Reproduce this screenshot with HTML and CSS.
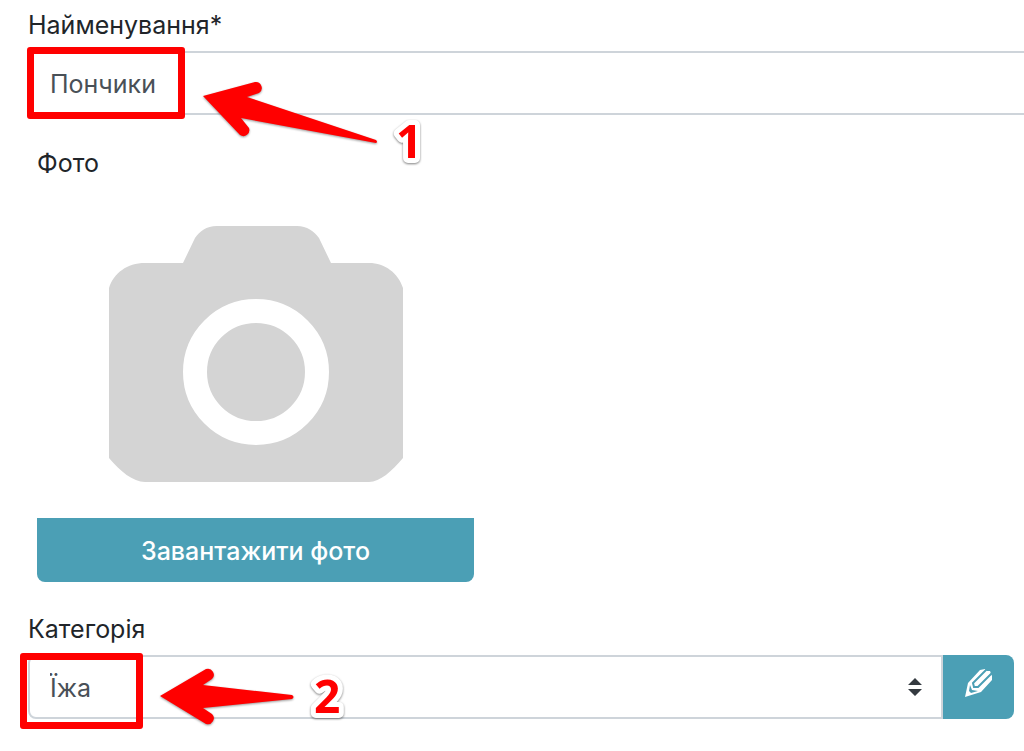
FILE: index.html
```html
<!DOCTYPE html>
<html lang="uk">
<head>
    <meta charset="UTF-8">
    <meta name="viewport" content="width=device-width, initial-scale=1.0">
    <title>Пончики</title>
    <link rel="stylesheet" href="styles.css">
</head>
<body>

    <form class="product-form">
        <div class="field">
            <label class="field-label" for="name">Найменування*</label>
            <div class="input-wrap input-wrap-wide">
                <input class="form-control" type="text" id="name" value="Пончики">
                <span class="highlight highlight-name"></span>
                <svg class="arrow arrow-name" viewBox="0 0 176 66" aria-hidden="true">
                    <path d="M0 15 L52 1 A6 6 0 0 1 56 12 L44 16 L173 59 Q175 61 173 62 L38 37 L46 47 A6 6 0 0 1 37 54 Z"/>
                </svg>
                <svg class="step step-name" viewBox="0 0 44 80">
                    <text x="8" y="56">1</text>
                </svg>
            </div>
        </div>

        <div class="photo">
            <label class="field-label" for="upload">Фото</label>
            <svg class="camera" viewBox="0 0 294 256" aria-hidden="true">
                <path d="M0 62 C5 47 18 37 36 37 H74 L86 12 C91 5 97 0 108 0 H188 C198 0 205 5 210 12 L222 37 H260 C276 37 289 47 294 62 V232 C283 245 271 256 260 256 H36 C24 256 11 245 0 232 Z"/>
                <circle class="camera-ring" cx="147" cy="146" r="61"/>
            </svg>
            <button class="btn btn-upload" type="button" id="upload">Завантажити фото</button>
        </div>

        <div class="field">
            <label class="field-label" for="category">Категорія</label>
            <div class="input-wrap">
                <select class="form-control form-select" id="category">
                    <option>Їжа</option>
                </select>
                <button class="btn btn-edit" type="button" aria-label="Редагувати">
                    <svg class="pencil" viewBox="0 0 28 28" aria-hidden="true">
                        <path d="M0 28 L3 14 L15 1 L20 0 L22 2 L25 2 L27 7 V11 L16 23 Z"/>
                        <path class="pencil-line" d="M22 0 L8 14 L9 18 L13 18 L28 3"/>
                        <path class="pencil-tip" d="M5 16 L7 21 L13 22 L6 24 L4 22 Z"/>
                        <path class="pencil-core" d="M11 16 L24 3"/>
                    </svg>
                </button>
                <span class="highlight highlight-category"></span>
                <svg class="arrow arrow-category" viewBox="0 0 136 58" aria-hidden="true">
                    <path d="M0 29 L46 2 A6 6 0 0 1 52 12 L43 18 L132 28 Q135 30 132 32 L43 41 L52 47 A6 6 0 0 1 46 57 Z"/>
                </svg>
                <svg class="step step-category" viewBox="0 0 44 80">
                    <text x="8" y="56">2</text>
                </svg>
            </div>
        </div>
    </form>

</body>
</html>
```
FILE: styles.css
```css
:root {
    --teal: #4b9fb5;
    --red: #ff0000;
    --border: #ced4da;
    --text: #212529;
    --input-text: #495057;
    --camera: #d4d4d4;
    --white: #ffffff;
}

* {
    box-sizing: border-box;
}

body {
    margin: 0;
    font-family: Inter, "Liberation Sans", sans-serif;
    font-size: 25px;
    line-height: 40px;
    color: var(--text);
    background-color: var(--white);
    overflow-x: hidden;
}

.product-form {
    padding: 5px 10px 24px 28px;
}

.field-label {
    display: block;
    margin-bottom: 6px;
}

.input-wrap {
    position: relative;
    display: flex;
}

/* The name field runs past the right edge of the window */
.input-wrap-wide {
    margin-right: -30px;
}

.form-control {
    flex: 1;
    min-width: 0;
    height: 64px;
    padding: 2px 20px 0;
    font: inherit;
    color: var(--input-text);
    background-color: var(--white);
    border: 2px solid var(--border);
    border-radius: 8px;
}

.form-select {
    appearance: none;
    border-radius: 8px 0 0 8px;
    background-image: url("data:image/svg+xml,%3Csvg xmlns='http://www.w3.org/2000/svg' viewBox='0 0 14 18'%3E%3Cpath fill='%23343a40' d='M0 7L7 0l7 7zM0 11h14l-7 7z'/%3E%3C/svg%3E");
    background-repeat: no-repeat;
    background-position: right 19px center;
    background-size: 14px 18px;
}

.photo {
    max-width: 446px;
    padding: 28px 0 27px 9px;
}

.camera {
    display: block;
    width: 294px;
    height: 256px;
    margin: 43px auto 36px;
    fill: var(--camera);
}

.camera-ring {
    fill: none;
    stroke: var(--white);
    stroke-width: 24px;
}

.btn {
    height: 64px;
    padding: 2px 0 0;
    font: inherit;
    color: var(--white);
    background-color: var(--teal);
    border: none;
    cursor: pointer;
}

.btn-upload {
    display: block;
    width: 100%;
    font-weight: 500;
    border-radius: 0 0 8px 8px;
}

.btn-edit {
    width: 71px;
    border-radius: 0 8px 8px 0;
}

.pencil {
    width: 28px;
    height: 28px;
    fill: var(--white);
}

.pencil-line {
    fill: none;
    stroke: var(--teal);
    stroke-width: 2px;
}

.pencil-tip {
    fill: var(--teal);
}

.pencil-core {
    fill: none;
    stroke: var(--white);
    stroke-width: 2px;
}

/* Red hints drawn over the form */
.highlight {
    position: absolute;
    border: 7px solid var(--red);
    border-radius: 3px;
}

.highlight-name {
    left: -1px;
    top: -4px;
    width: 158px;
    height: 72px;
}

.highlight-category {
    left: -8px;
    top: -2px;
    width: 123px;
    height: 76px;
}

.arrow {
    position: absolute;
    fill: var(--red);
    filter: drop-shadow(0 1px 1px rgba(0, 0, 0, 0.4));
}

.arrow-name {
    left: 175px;
    top: 30px;
    width: 176px;
    height: 66px;
}

.arrow-category {
    left: 132px;
    top: 12px;
    width: 136px;
    height: 58px;
}

.step {
    position: absolute;
    width: 44px;
    height: 80px;
    font-family: "Open Sans", sans-serif;
    font-size: 46px;
    font-weight: 700;
    fill: var(--red);
    stroke: var(--white);
    stroke-width: 10px;
    stroke-linejoin: round;
    paint-order: stroke fill;
    filter: drop-shadow(0 1px 1px rgba(0, 0, 0, 0.5));
}

.step-name {
    left: 360px;
    top: 51px;
}

.step-category {
    left: 278px;
    top: 2px;
}
```
